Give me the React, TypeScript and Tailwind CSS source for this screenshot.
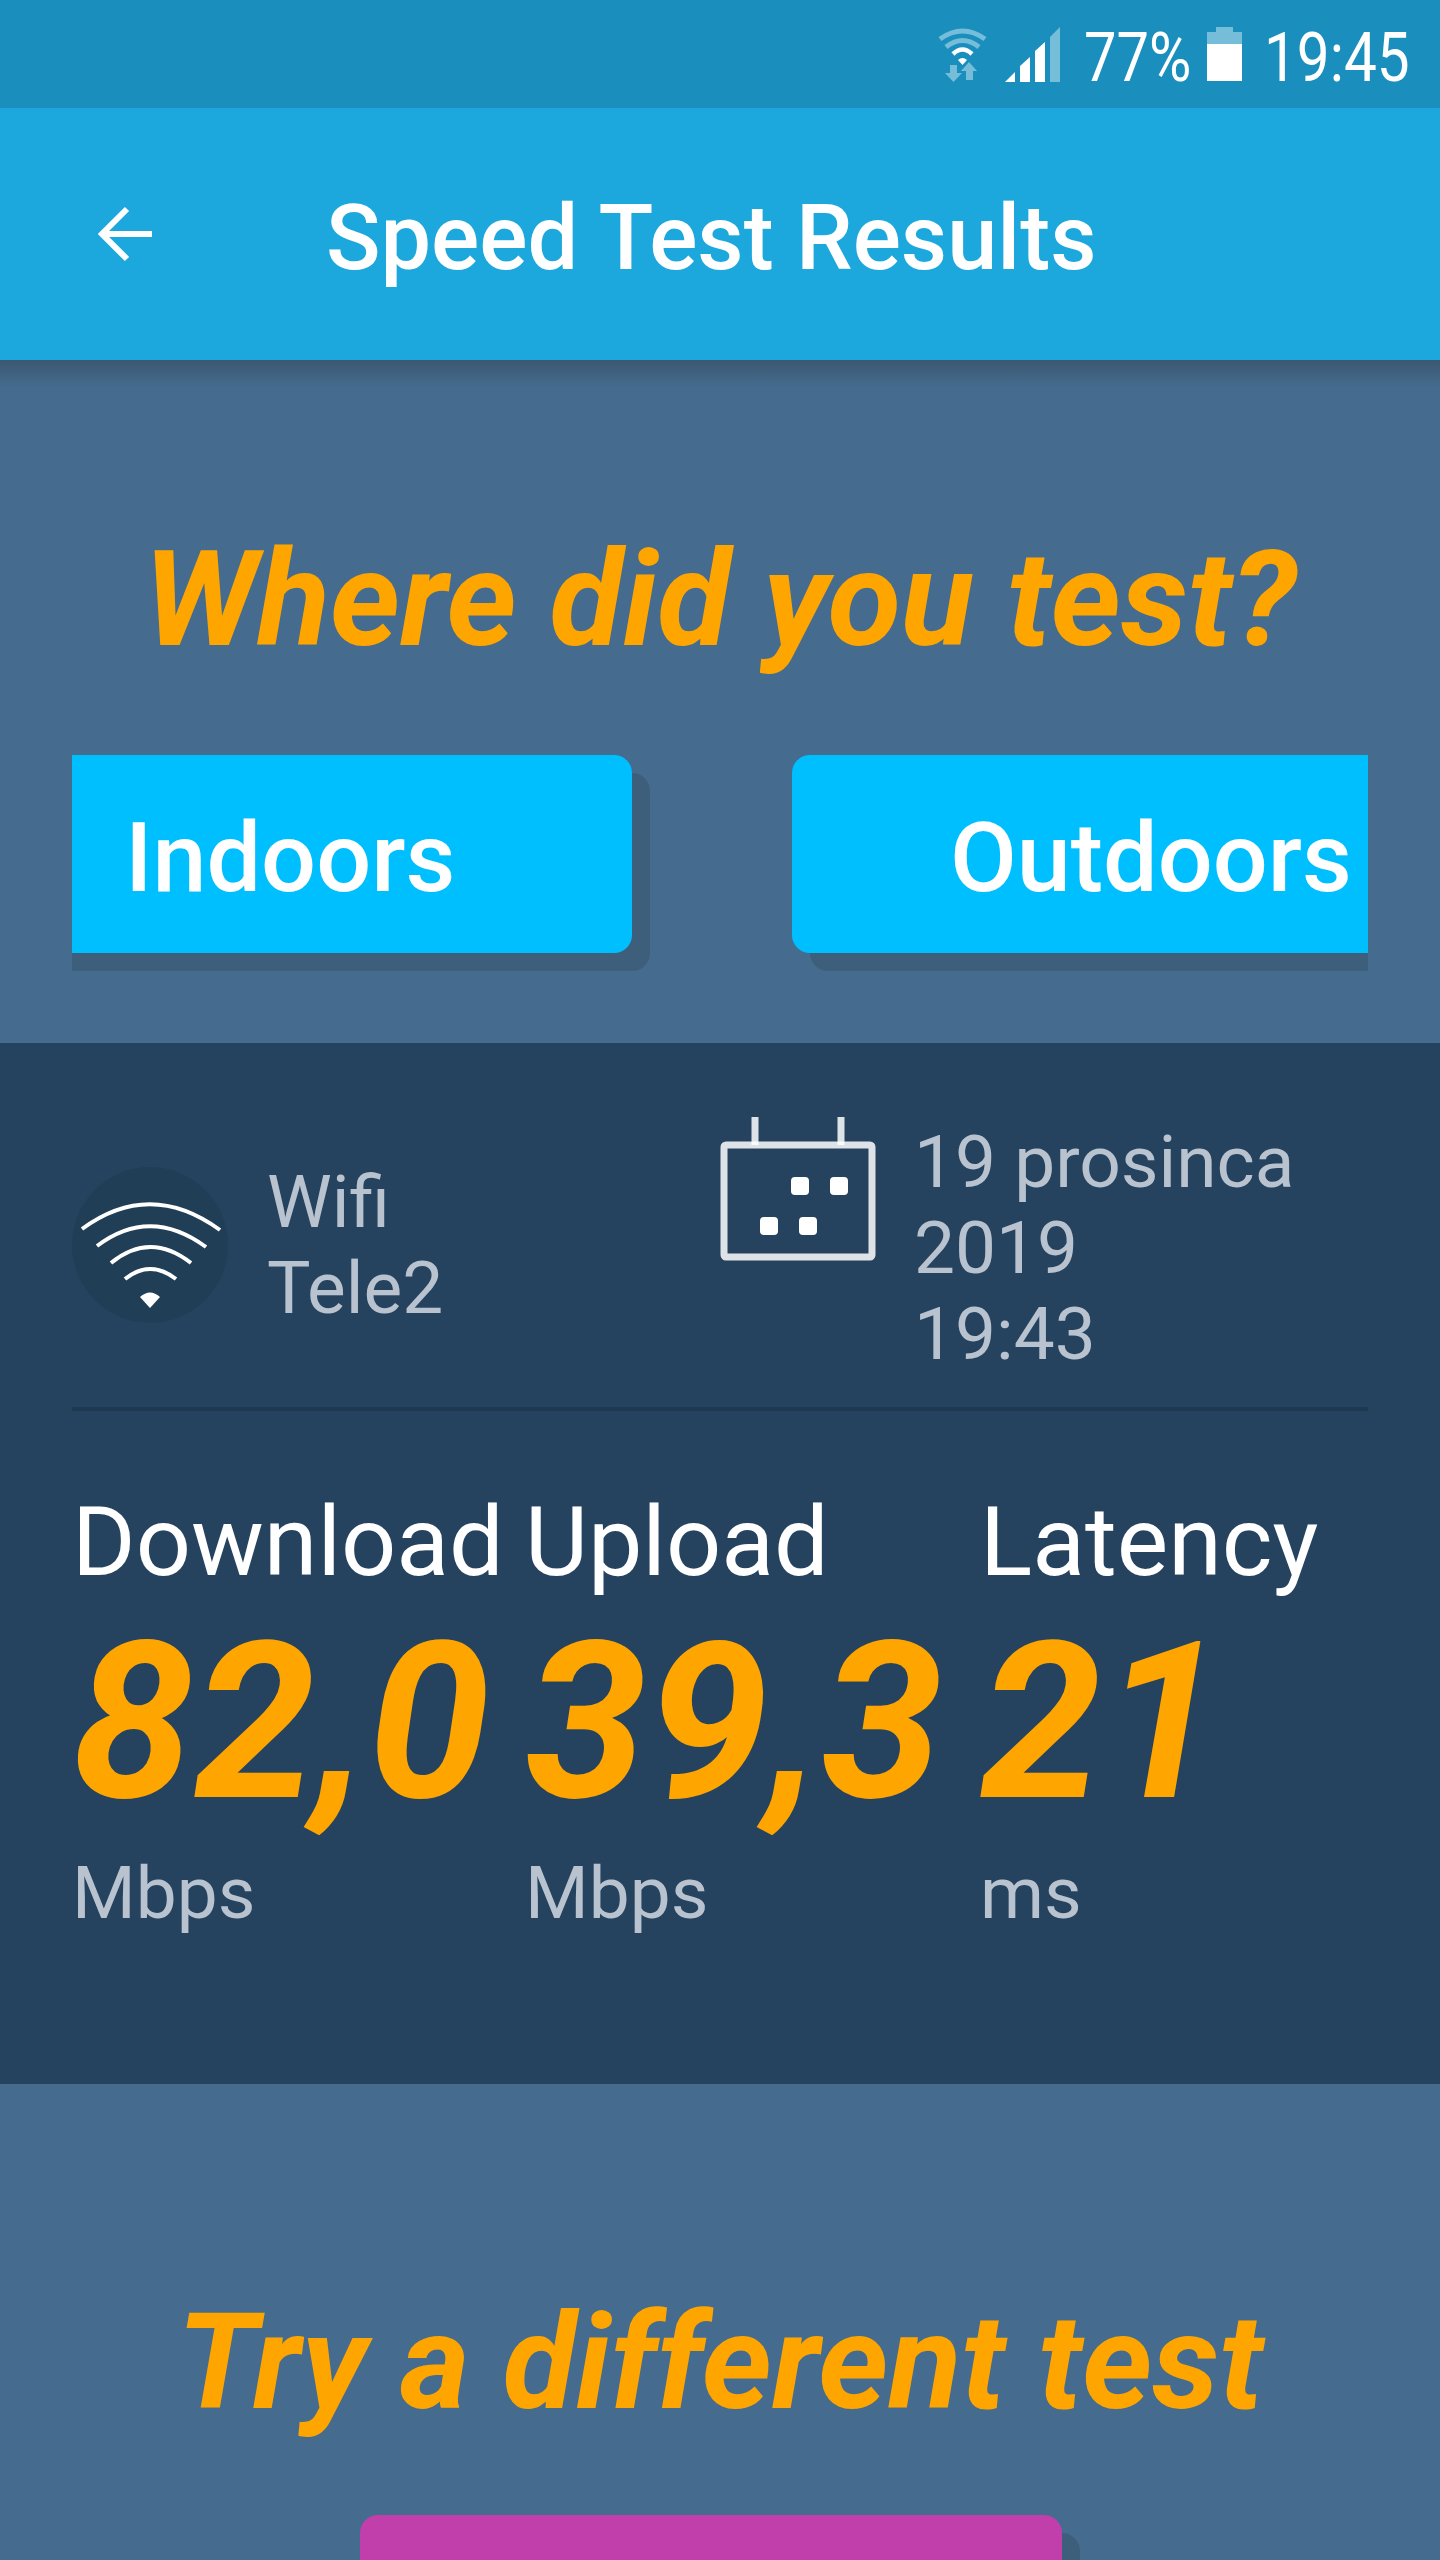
import React from "react";

const font = { fontFamily: "Roboto, sans-serif" };

function StatusWifi() {
  return (
    <svg width="49" height="55" viewBox="0 0 49 55" fill="none">
      <path d="M2 12 Q24.500 -4 47 12" stroke="#75bdd8" strokeWidth="5" />
      <path d="M8 20 Q24.500 7 41 20" stroke="#75bdd8" strokeWidth="5" />
      <path d="M15 27 Q24.500 18 34 27" stroke="#fff" strokeWidth="4.500" />
      <path d="M20 33 L24.500 38 L29 33 Q24.500 29 20 33 Z" fill="#fff" />
      <path d="M12 40 H19 V48 H24 L15.500 57 L7 48 H12 Z" fill="#75bdd8" transform="translate(0,-2)" />
      <path d="M31 35 L39 44 H35 V53 H28 V44 H23 Z" fill="#75bdd8" />
    </svg>
  );
}

function StatusSignal() {
  return (
    <svg width="55" height="55" viewBox="0 0 55 55">
      <polygon points="0,55 10,45 10,55" fill="#fff" />
      <polygon points="15,39 25,30 25,55 15,55" fill="#fff" />
      <polygon points="30,24 40,15 40,55 30,55" fill="#fff" />
      <polygon points="45,10 55,0 55,55 45,55" fill="#75bdd8" />
    </svg>
  );
}

function Battery() {
  return (
    <svg width="35" height="54" viewBox="0 0 35 54">
      <rect x="9" y="0" width="17" height="6" fill="#75bdd8" />
      <rect x="0" y="5" width="35" height="12" fill="#75bdd8" />
      <rect x="0" y="17" width="35" height="37" fill="#fff" />
    </svg>
  );
}

function BackArrow() {
  return (
    <svg width="56" height="56" viewBox="0 0 56 56" fill="none" stroke="#fff" strokeWidth="6">
      <path d="M54 28 H4" />
      <path d="M29 3 L4 28 L29 53" />
    </svg>
  );
}

function WifiBadge() {
  return (
    <div className="h-[156px] w-[156px] shrink-0 rounded-full bg-[#213e57]">
      <svg width="156" height="156" viewBox="0 0 156 156" fill="none" stroke="#fff" strokeWidth="4">
        <path d="M10 62 Q78 12 148 63" />
        <path d="M25 79 Q78 39 134 80" />
        <path d="M39 96 Q78 64 119 96" />
        <path d="M53 112 Q78 92 104 112" />
        <path d="M68 130 Q78 121 88 130 L78 141 Z" fill="#fff" stroke="none" />
      </svg>
    </div>
  );
}

function CalendarIcon() {
  return (
    <svg width="156" height="144" viewBox="0 0 156 144" fill="none" stroke="#fff" className="shrink-0">
      <path d="M35 0 V28 M121 0 V28" strokeWidth="7" strokeOpacity="0.85" />
      <rect x="4" y="28" width="148" height="112" rx="2" strokeWidth="7" strokeOpacity="0.85" />
      <rect x="71" y="60" width="18" height="18" rx="4" fill="#fff" stroke="none" />
      <rect x="110" y="60" width="18" height="18" rx="4" fill="#fff" stroke="none" />
      <rect x="40" y="100" width="18" height="18" rx="4" fill="#fff" stroke="none" />
      <rect x="79" y="100" width="18" height="18" rx="4" fill="#fff" stroke="none" />
    </svg>
  );
}

function Stat({ label, value, unit }: { label: string; value: string; unit: string }) {
  return (
    <div className="flex flex-col whitespace-nowrap">
      <div className="h-[106px] text-[97px] leading-[106px] text-white">{label}</div>
      <div className="mt-[14px] h-[226px] text-[219px] font-bold italic leading-[226px] text-[#ffa500]">{value}</div>
      <div className="mt-[15px] h-[86px] text-[73px] leading-[86px] text-[#b9c3cf]">{unit}</div>
    </div>
  );
}

export default function App() {
  return (
    <div style={font} className="flex h-[2560px] w-[1440px] flex-col overflow-hidden bg-[#456c8e]">
      <div className="flex h-[108px] shrink-0 items-start bg-[#1a8fbd] pl-[938px] pt-[27px]">
        <StatusWifi />
        <div className="ml-[18px]"><StatusSignal /></div>
        <div className="ml-[24px] w-[123px] origin-left scale-x-[0.85] whitespace-nowrap text-[68px] leading-[62px] text-white">77%</div>
        <Battery />
        <div className="ml-[22px] w-[150px] origin-left scale-x-[0.86] whitespace-nowrap text-[68px] leading-[62px] text-white">19:45</div>
      </div>

      <div className="relative z-10 flex h-[252px] shrink-0 items-center bg-[#1ca8dd] pl-[98px]">
        <BackArrow />
        <div className="ml-[172px] mt-[9px] whitespace-nowrap text-[90px] font-medium leading-none text-white">Speed Test Results</div>
      </div>

      <div className="h-[683px] shrink-0 bg-gradient-to-b from-[#3b5872] from-0% to-[#456c8e] to-[4%] pt-[170px]">
        <div className="h-[140px] whitespace-nowrap text-center text-[134px] font-bold italic leading-[140px] text-[#ffa500]">Where did you test?</div>
        <div className="mx-[72px] mt-[85px] flex justify-between overflow-hidden pb-[18px]">
          <div className="-ml-[40px] flex h-[198px] w-[600px] items-center rounded-[18px] bg-[#00bfff] pb-[0px] pl-[93px] pt-[10px] text-[97px] font-medium text-white shadow-[18px_18px_0_#3e5f7b]">Indoors</div>
          <div className="-mr-[40px] flex h-[198px] w-[616px] items-center rounded-[18px] bg-[#00bfff] pl-[158px] pt-[10px] text-[97px] font-medium text-white shadow-[18px_18px_0_#3e5f7b]">Outdoors</div>
        </div>
      </div>

      <div className="h-[1041px] shrink-0 bg-[#25435f] px-[72px]">
        <div className="flex h-[368px] border-b-[4px] border-[#1f3a50]">
          <div className="flex w-[648px] items-center pt-[40px]">
            <WifiBadge />
            <div className="ml-[39px] text-[73px] leading-[86px] text-[#b9c3cf]">
              <div>Wifi</div>
              <div>Tele2</div>
            </div>
          </div>
          <div className="flex pt-[74px]">
            <CalendarIcon />
            <div className="ml-[38px] mt-[2px] text-[73px] leading-[86px] text-[#b9c3cf]">
              <div>19 prosinca</div>
              <div>2019</div>
              <div>19:43</div>
            </div>
          </div>
        </div>
        <div className="mt-[78px] grid grid-cols-[453px_455px_1fr]">
          <Stat label="Download" value="82,0" unit="Mbps" />
          <Stat label="Upload" value="39,3" unit="Mbps" />
          <Stat label="Latency" value="21" unit="ms" />
        </div>
      </div>

      <div className="flex-1 pt-[209px]">
        <div className="h-[140px] whitespace-nowrap text-center text-[134px] font-bold italic leading-[140px] text-[#ffa500]">Try a different test</div>
        <div className="ml-[360px] mt-[82px] h-[200px] w-[702px] rounded-[18px] bg-[#c03fab] shadow-[18px_18px_0_#3e5f7b]" />
      </div>
    </div>
  );
}
